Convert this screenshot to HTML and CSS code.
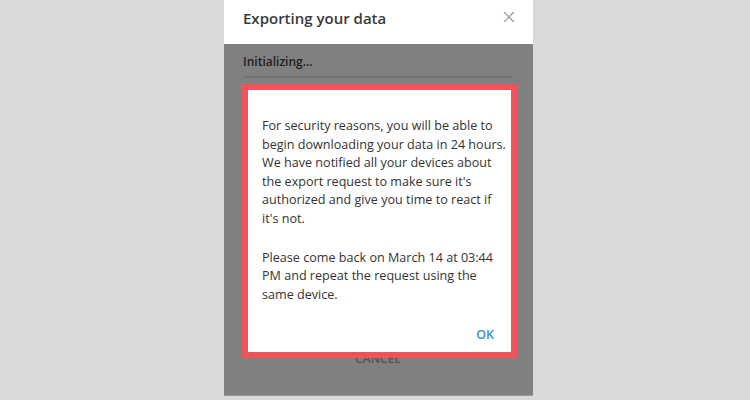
FILE: index.html
```html
<!DOCTYPE html>
<html lang="en">
<head>
    <meta charset="UTF-8">
    <meta name="viewport" content="width=device-width, initial-scale=1.0">
    <title>Exporting your data</title>
    <link rel="stylesheet" href="styles.css">
</head>
<body>
    <div class="panel">
        <div class="panel-header">
            <h1>Exporting your data</h1>
            <button class="close" aria-label="Close">
                <svg width="12" height="12" viewBox="0 0 12 12">
                    <path d="M1 1 L11 11 M11 1 L1 11" stroke="#a3a3a3" stroke-width="1.4" fill="none"/>
                </svg>
            </button>
        </div>
        <div class="panel-body">
            <div class="status">Initializing...</div>
            <div class="progress"></div>
            <div class="cancel">CANCEL</div>
        </div>

        <div class="dialog">
            <p>For security reasons, you will be able to<br>
            begin downloading your data in 24 hours.<br>
            We have notified all your devices about<br>
            the export request to make sure it's<br>
            authorized and give you time to react if<br>
            it's not.</p>
            <p>Please come back on March 14 at 03:44<br>
            PM and repeat the request using the<br>
            same device.</p>
            <div class="dialog-actions">
                <button class="ok">OK</button>
            </div>
        </div>
    </div>
</body>
</html>
```

FILE: styles.css
```css
body {
    font-family: 'Open Sans', 'Liberation Sans', sans-serif;
    margin: 0;
    height: 400px;
    background-color: #d9d9d9;
    overflow: hidden;
}
.panel {
    position: relative;
    margin-left: 224px;
    width: 309px;
    height: 400px;
    display: flex;
    flex-direction: column;
}
.panel-header {
    background: #fff;
    height: 44px;
    box-sizing: border-box;
    padding: 7px 18px 0 19px;
    display: flex;
    justify-content: space-between;
    align-items: flex-start;
}
.panel-header h1 {
    margin: 0;
    font-size: 15px;
    font-weight: 600;
    line-height: 22px;
    color: #3a3a3a;
}
.close {
    border: none;
    background: none;
    padding: 0;
    margin-top: 4px;
    width: 12px;
    height: 12px;
    cursor: pointer;
}
.panel-body {
    flex: 1;
    background-color: #808080;
    padding: 9px 20px 0 19px;
    display: flex;
    flex-direction: column;
    border-bottom: 1px solid #9a9a9a;
    margin-bottom: 4px;
}
.status {
    font-size: 12px;
    font-weight: 600;
    line-height: 18px;
    color: #1e1e1e;
}
.progress {
    margin-top: 5px;
    height: 2px;
    background-color: #737373;
}
.cancel {
    margin-top: auto;
    margin-bottom: 28px;
    text-align: center;
    font-size: 12px;
    font-weight: 600;
    color: #555;
}
.dialog {
    position: absolute;
    left: 18px;
    top: 84px;
    width: 275px;
    height: 274px;
    box-sizing: border-box;
    background: #fff;
    border: 6px solid #f2535b;
    padding: 27px 4px 0 14px;
    display: flex;
    flex-direction: column;
}
.dialog p {
    margin: 0 0 20px;
    font-size: 12.6px;
    line-height: 18.6px;
    color: #333;
    white-space: nowrap;
}
.dialog-actions {
    display: flex;
    justify-content: flex-end;
    padding-right: 13px;
    margin-top: 2px;
}
.ok {
    border: none;
    background: none;
    padding: 0;
    font-family: inherit;
    font-size: 12.5px;
    font-weight: 600;
    color: #3d8fc4;
    cursor: pointer;
}
```
